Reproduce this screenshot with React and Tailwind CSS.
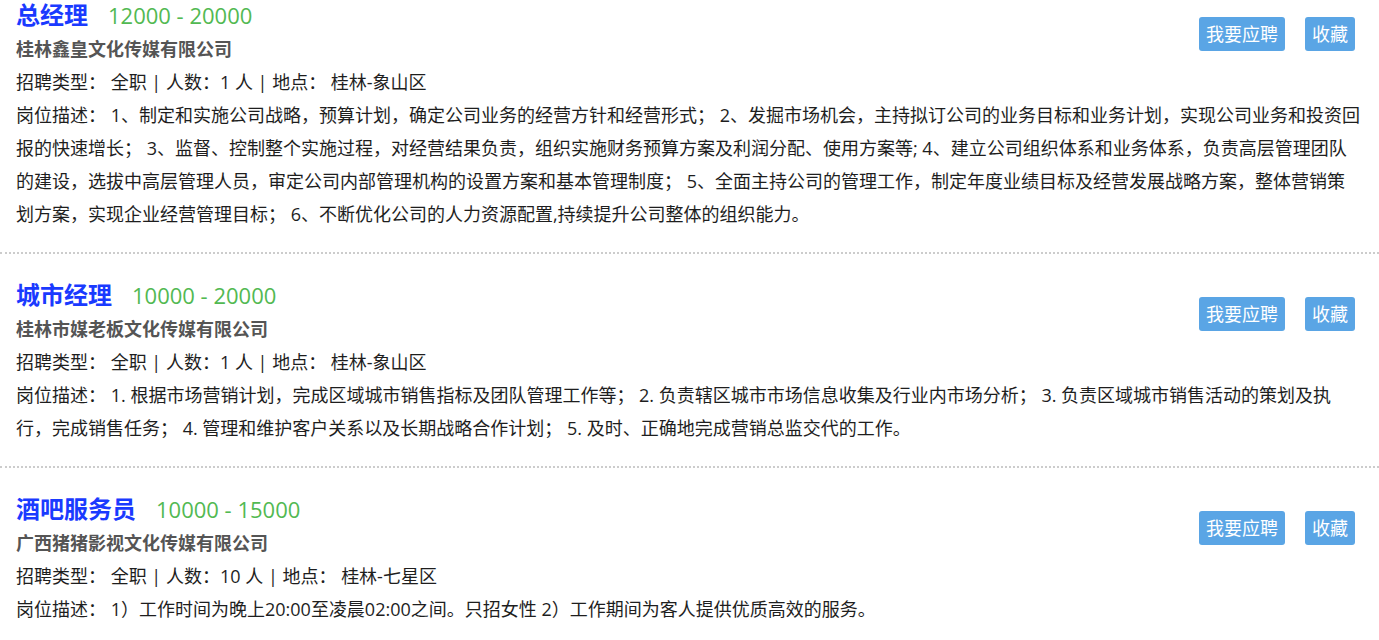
import React from "react";

const JOBS = [
  {
    title: "总经理",
    salary: "12000 - 20000",
    company: "桂林鑫皇文化传媒有限公司",
    type: "全职",
    count: "1",
    place: "桂林-象山区",
    desc: [
      "1、制定和实施公司战略，预算计划，确定公司业务的经营方针和经营形式； 2、发掘市场机会，主持拟订公司的业务目标和业务计划，实现公司业务和投资回报的快速增长； 3、监督、控制整个实施过程，对经营结果负责，组织实施财务预算方案及利润分配、使用方案等; 4、建立公司组织体系和业务体系，负责高层管理团队的建设，选拔中高层管理人员，审定公司内部管理机构的设置方案和基本管理制度； 5、全面主持公司的管理工作，制定年度业绩目标及经营发展战略方案，整体营销策",
      "划方案，实现企业经营管理目标； 6、不断优化公司的人力资源配置,持续提升公司整体的组织能力。",
    ],
  },
  {
    title: "城市经理",
    salary: "10000 - 20000",
    company: "桂林市媒老板文化传媒有限公司",
    type: "全职",
    count: "1",
    place: "桂林-象山区",
    desc: [
      "1. 根据市场营销计划，完成区域城市销售指标及团队管理工作等； 2. 负责辖区城市市场信息收集及行业内市场分析； 3. 负责区域城市销售活动的策划及执行，完成销售任务； 4. 管理和维护客户关系以及长期战略合作计划； 5. 及时、正确地完成营销总监交代的工作。",
    ],
  },
  {
    title: "酒吧服务员",
    salary: "10000 - 15000",
    company: "广西猪猪影视文化传媒有限公司",
    type: "全职",
    count: "10",
    place: "桂林-七星区",
    desc: ["1）工作时间为晚上20:00至凌晨02:00之间。只招女性 2）工作期间为客人提供优质高效的服务。"],
  },
];

function JobItem({ job, first }) {
  return (
    <div className={`${first ? "-mt-[2px]" : "pt-6 border-t-2 border-dotted border-[#cccccc]"} pb-[21px] px-4`}>
      <div className="float-right mt-[19px] mr-2 flex gap-5">
        <button className="h-[34px] px-[7px] rounded-[3px] bg-[#5aa5e5] text-white text-[18px] leading-[34px]">我要应聘</button>
        <button className="h-[34px] px-[7px] rounded-[3px] bg-[#5aa5e5] text-white text-[18px] leading-[34px]">收藏</button>
      </div>
      <div className="leading-[33px] flex items-baseline">
        <span className="text-[24px] font-bold text-[#1a3aff]">{job.title}</span>
        <span className="ml-5 text-[22px] text-[#52b952]">{job.salary}</span>
      </div>
      <div className="leading-[34px] text-[18px] font-bold text-[#555555]">{job.company}</div>
      <div className="leading-[33px] text-[18px] text-[#1e1e1e]">
        招聘类型： {job.type} | 人数：{job.count} 人 | 地点： {job.place}
      </div>
      <div className="leading-[33px] text-[18px] text-[#1e1e1e]">
        岗位描述： {job.desc.map((part, i) => (
          <React.Fragment key={i}>
            {i > 0 && <br />}
            {part}
          </React.Fragment>
        ))}
      </div>
    </div>
  );
}

export default function App() {
  return (
    <div className="w-[1379px] bg-white" style={{ fontFamily: '"Open Sans", "Noto Sans CJK SC", sans-serif' }}>
      {JOBS.map((j, i) => (
        <JobItem key={j.title} job={j} first={i === 0} />
      ))}
    </div>
  );
}
